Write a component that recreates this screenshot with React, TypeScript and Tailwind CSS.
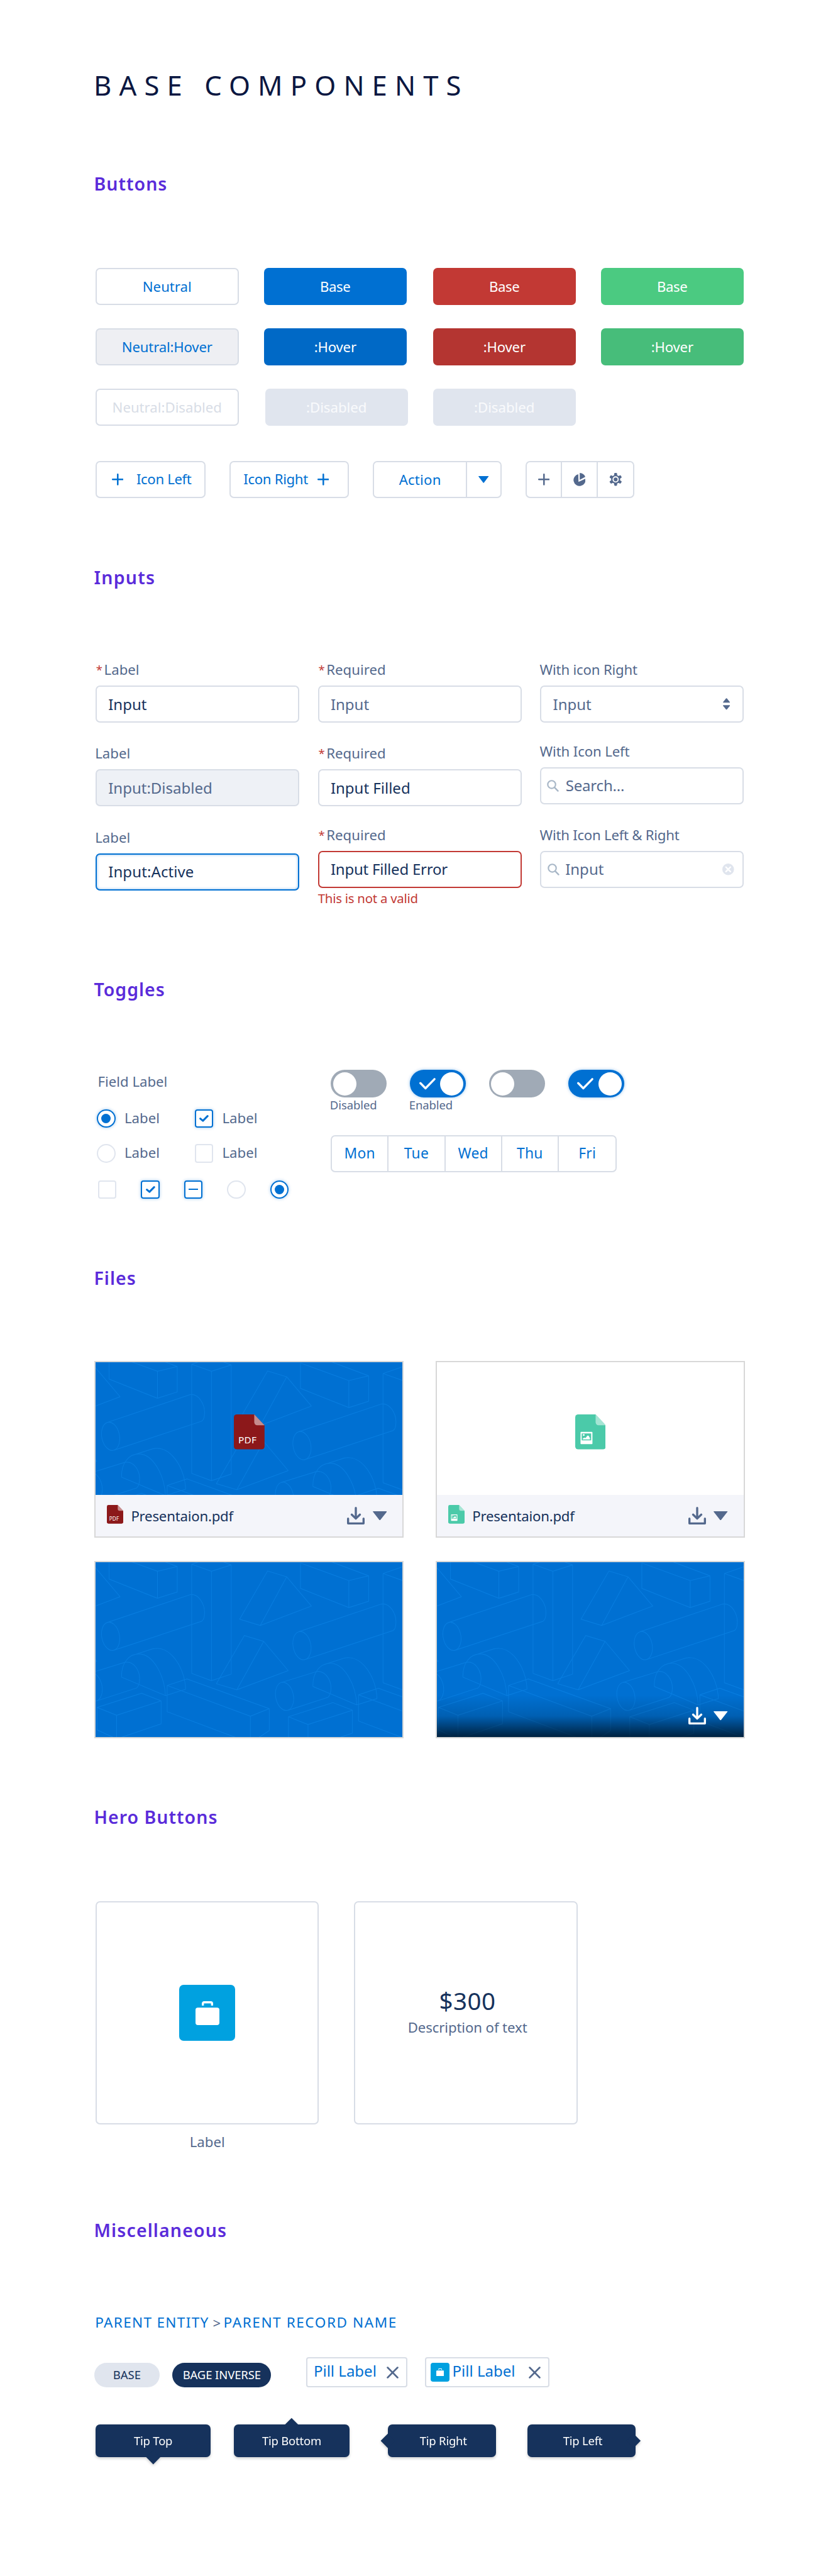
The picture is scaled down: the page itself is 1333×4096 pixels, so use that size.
import React from "react";

const cx = (...parts: (string | false | undefined)[]) => parts.filter(Boolean).join(" ");

/* ---------- icons ---------- */

const Plus = ({ className }: { className?: string }) => (
  <svg className={cx("h-[18.6px] w-[18.6px] shrink-0", className)} viewBox="0 0 20 20" fill="none" stroke="currentColor" strokeWidth="2.7" strokeLinecap="round">
    <path d="M10 1.3v17.4M1.3 10h17.4" />
  </svg>
);

const Caret = ({ className }: { className?: string }) => (
  <svg className={cx("shrink-0", className)} viewBox="0 0 24 15.4" fill="currentColor" preserveAspectRatio="none">
    <path d="M0.8 0h22.4q1.2 .2 .4 1.2L12.9 14.9q-.9 .9-1.8 0L.4 1.2Q-.4 .2 .8 0Z" />
  </svg>
);

const Pie = () => (
  <svg className="h-[20.6px] w-[19.4px]" viewBox="0 0 21 22.3" fill="currentColor">
    <path d="M8.5 2.2A10.3 10.3 0 1 0 20.7 10L8.9 15.4Z" />
    <path d="M11 0A11 11 0 0 1 20.6 6.7L11 11.9Z" />
  </svg>
);

const Gear = () => (
  <svg className="h-[20.6px] w-[20.6px]" viewBox="-11.2 -11.2 22.4 22.4">
    <g fill="currentColor">
      <circle r="7.8" />
      <rect x="-2.5" y="-11.1" width="5" height="22.2" rx="1.6" />
      <rect x="-2.5" y="-11.1" width="5" height="22.2" rx="1.6" transform="rotate(60)" />
      <rect x="-2.5" y="-11.1" width="5" height="22.2" rx="1.6" transform="rotate(120)" />
    </g>
    <circle r="4.4" fill="none" stroke="#fff" strokeWidth="2" />
  </svg>
);

const SortArrows = () => (
  <svg className="h-[18.6px] w-[11.2px] text-[#54698d]" viewBox="0 0 12 20" fill="currentColor">
    <path d="M.7 7.8Q-.3 7.6 .3 6.6L5.2.6Q6 -.2 6.8.6L11.7 6.6Q12.3 7.6 11.3 7.8Z" />
    <path d="M.7 12.2Q-.3 12.4 .3 13.4L5.2 19.4Q6 20.2 6.8 19.4L11.7 13.4Q12.3 12.4 11.3 12.2Z" />
  </svg>
);

const Search = () => (
  <svg className="h-[18.8px] w-[18.8px] shrink-0 text-[#a8b7c7]" viewBox="0 0 20 20" fill="none" stroke="currentColor" strokeLinecap="round">
    <circle cx="8" cy="7.9" r="6.6" strokeWidth="2.3" />
    <path d="M12.9 12.9L18.6 18.7" strokeWidth="2.6" />
  </svg>
);

const Clear = () => (
  <svg className="h-[18.6px] w-[18.6px]" viewBox="0 0 20 20">
    <circle cx="10" cy="10" r="10" fill="#e0e5ee" />
    <path d="M6.2 6.2l7.6 7.6M13.8 6.2l-7.6 7.6" stroke="#fff" strokeWidth="2.6" strokeLinecap="round" />
  </svg>
);

const Cross = () => (
  <svg className="h-[19px] w-[19px] text-[#54698d]" viewBox="0 0 20.6 20.6" fill="none" stroke="currentColor" strokeWidth="2.9" strokeLinecap="round">
    <path d="M1.7 1.7l17.2 17.2M18.9 1.7L1.7 18.9" />
  </svg>
);

const Download = () => (
  <svg className="h-[28px] w-[28px] shrink-0" viewBox="0 0 30 30" fill="none" stroke="currentColor" strokeWidth="3.6" strokeLinecap="round" strokeLinejoin="round">
    <path d="M15 1.8V19.5M8 13.2l7 6.8 7-6.8" />
    <path d="M1.8 20V28.2H28.2V20" />
  </svg>
);

const Briefcase = ({ className }: { className?: string }) => (
  <svg className={className} viewBox="0 0 41 41">
    <path d="M12.6 7.6V4Q12.6 1.9 14.8 1.9H26.2Q28.4 1.9 28.4 4V7.6" fill="none" stroke="#fff" strokeWidth="3.6" />
    <rect x="0" y="11" width="41" height="30" rx="4" fill="#fff" />
  </svg>
);

const FileIcon = ({ kind, className }: { kind: "pdf" | "image"; className?: string }) => (
  <svg className={cx("shrink-0", className)} viewBox="0 0 52 60" preserveAspectRatio="none">
    <path
      d="M5 0H34.6L52 18.6V55a5 5 0 0 1-5 5H5a5 5 0 0 1-5-5V5a5 5 0 0 1 5-5Z"
      fill={kind === "pdf" ? "#8c181a" : "#4bcaa9"}
    />
    <path d="M34.6 0L52 18.6H39.6a5 5 0 0 1-5-5Z" fill="#fff" fillOpacity="0.5" />
    {kind === "pdf" ? (
      <text x="7.6" y="50.2" fill="#fff" fontFamily="Noto Sans, sans-serif" fontSize="16.4" letterSpacing="0.2">
        PDF
      </text>
    ) : (
      <g>
        <path d="M10 30H28.2a1 1 0 0 1 1 1V50a1 1 0 0 1-1 1H10a1 1 0 0 1-1-1V31a1 1 0 0 1 1-1ZM11 32.6V44.4H27V32.6Z" fill="#fff" fillRule="evenodd" />
        <path d="M12.9 42.8V41.4L15.4 39.8L17.6 40.6L20.6 36.4H22.6L25 40.8V42.8Z" fill="#fff" />
        <circle cx="14.4" cy="35.4" r="1.6" fill="#fff" />
      </g>
    )}
  </svg>
);

/* ---------- decorative block pattern ---------- */

const Blocks = () => (
  <g>
    <path d="M144 805V906L369 982V875ZM369 982L461 957V856L369 875M461 856L290 801" />
    <path d="M528 847V1280L620 1309L712 1283V850L620 820ZL620 875L712 850M620 875V1309" />
    <ellipse cx="151" cy="1133" rx="41" ry="57" transform="rotate(-16 151 1133)" />
    <path d="M135 1078L520 968C560 962 589 1006 588 1040Q588 1066 575 1073L167 1188" />
    <path d="M881 874L970 897L847 1090L751 1065ZM970 897L1085 1013L847 1090" />
    <path d="M773 1130L863 1153L738 1345L643 1321ZM863 1153L977 1269L738 1345" />
    <path d="M202 1295C200 1240 235 1203 282 1203C350 1203 402 1290 406 1368ZM247 1210L345 1183C430 1165 497 1260 500 1343L406 1368" />
    <ellipse cx="70" cy="1334" rx="41" ry="57" transform="rotate(-16 70 1334)" />
    <path d="M55 1279L218 1236C258 1230 287 1268 286 1303Q285 1329 272 1338L87 1389" />
    <path d="M414 1328L506 1302L889 1420L801 1450ZV1432L801 1556V1450M889 1420V1507L801 1556" />
    <path d="M88 1415L295 1359L386 1389L179 1446ZV1504L179 1540V1446M386 1389V1480L179 1540" />
  </g>
);

const Pattern = ({ viewHeight }: { viewHeight: number }) => (
  <svg className="block h-full w-full" viewBox={`81 839 1428 ${viewHeight}`} preserveAspectRatio="none">
    <g fill="none" stroke="#087ddf" strokeWidth="3" strokeLinejoin="round">
      <g transform="translate(-890 -37)"><Blocks /></g>
      <Blocks />
      <g transform="translate(890 37)"><Blocks /></g>
    </g>
  </svg>
);

/* ---------- sections ---------- */

const Section = ({ title, height, tracking = "tracking-[1px]", children }: { title: string; height: string; tracking?: string; children: React.ReactNode }) => (
  <section className={cx("flex flex-col", height)}>
    <h2 className={cx("-ml-[2.5px] text-[28.5px] leading-[40px] font-semibold text-[#5a2bda]", tracking)}>{title}</h2>
    {children}
  </section>
);

const Button = ({ children, className }: { children: React.ReactNode; className: string }) => (
  <div className={cx("flex h-[59px] w-[227.5px] items-center justify-center rounded-[7px] text-[22.2px]", className)}>{children}</div>
);

const outlined = "border-2 border-[#d8dde6]";

const Buttons = () => (
  <Section title="Buttons" height="h-[625.4px]">
    <div className="mt-[113.6px] grid grid-cols-[267.5px_269px_267px_228px] gap-y-[37.2px]">
      <Button className={cx(outlined, "text-[#0070d2]")}>Neutral</Button>
      <Button className="bg-[#0070d2] tracking-[-0.4px] text-white">Base</Button>
      <Button className="bg-[#c23934] tracking-[-0.4px] text-white">Base</Button>
      <Button className="bg-[#4bca81] tracking-[-0.4px] text-white">Base</Button>
      <Button className={cx(outlined, "bg-[#eeeff3] tracking-[-0.18px] text-[#0070d2]")}>Neutral:Hover</Button>
      <Button className="bg-[#0069c6] tracking-[-0.18px] text-white">:Hover</Button>
      <Button className="bg-[#b43531] tracking-[-0.18px] text-white">:Hover</Button>
      <Button className="bg-[#47bd7a] tracking-[-0.18px] text-white">:Hover</Button>
      <Button className={cx(outlined, "text-[#d8dde6]")}>Neutral:Disabled</Button>
      <Button className="ml-[2px] bg-[#e0e5ee] text-white/80">:Disabled</Button>
      <Button className="bg-[#e0e5ee] text-white/80">:Disabled</Button>
    </div>
    <div className="mt-[55.4px] flex gap-[38px] text-[22.2px] text-[#0070d2]">
      <div className={cx("flex h-[59px] w-[175.3px] items-center rounded-[7px] pb-[1.5px] pl-[23.7px] tracking-[-0.36px]", outlined)}>
        <Plus className="relative top-[0.8px] mr-[20.6px]" />
        Icon Left
      </div>
      <div className={cx("flex h-[59px] w-[189.8px] items-center rounded-[7px] pb-[1.5px] pl-[20px] tracking-[-0.34px]", outlined)}>
        Icon Right
        <Plus className="relative top-[0.8px] ml-[15px]" />
      </div>
      <div className={cx("flex h-[59px] w-[204.8px] rounded-[7px]", outlined)}>
        <div className="flex w-[146px] items-center justify-center tracking-[0.2px]">Action</div>
        <div className="flex flex-1 items-center justify-center border-l-2 border-[#d8dde6]">
          <Caret className="h-[10.8px] w-[16.4px]" />
        </div>
      </div>
      <div className={cx("grid h-[59px] w-[173.4px] grid-cols-3 divide-x-2 divide-[#d8dde6] rounded-[7px] text-[#54698d]", outlined)}>
        <div className="flex items-center justify-center"><Plus /></div>
        <div className="flex items-center justify-center"><Pie /></div>
        <div className="flex items-center justify-center"><Gear /></div>
      </div>
    </div>
  </Section>
);

const Field = ({
  label,
  required,
  labelTracking,
  box = "border-[#d8dde6]",
  pad = "pl-[18.2px]",
  icon,
  end,
  children,
}: {
  label: string;
  required?: boolean;
  labelTracking?: string;
  box?: string;
  pad?: string;
  icon?: React.ReactNode;
  end?: React.ReactNode;
  children: React.ReactNode;
}) => (
  <div>
    <div className={cx("flex h-[30px] items-center text-[22.2px] leading-[30px] text-[#54698d]", labelTracking)}>
      {required && <span className="w-[14.4px] shrink-0 pl-[0.8px] text-[18.5px] leading-[30px] text-[#c23934]">*</span>}
      <span className="-ml-[0.8px] whitespace-nowrap">{label}</span>
    </div>
    <div className={cx("mt-[10px] flex h-[59px] w-[324px] items-center rounded-[7px] border-2 text-[24px]", pad, box)}>
      {icon}
      <span className="flex-1 whitespace-nowrap">{children}</span>
      {end}
    </div>
  </div>
);

const Inputs = () => (
  <Section title="Inputs" height="h-[655.5px]" tracking="tracking-[1.25px]">
    <div className="mt-[112.4px] flex gap-[29.7px] text-[#16325c]">
      <div className="flex w-[324px] flex-col gap-[34.2px]">
        <Field label="Label" required>Input</Field>
        <Field label="Label" box="border-[#d8dde6] bg-[#eef1f6] text-[#54698d]">Input:Disabled</Field>
        <Field label="Label" box="border-[#0070d2] shadow-[inset_0_0_4px_rgba(0,112,210,0.45)] tracking-[0.1px]">Input:Active</Field>
      </div>
      <div className="flex w-[324px] flex-col">
        <Field label="Required" required box="border-[#d8dde6] text-[#54698d]">Input</Field>
        <div className="mt-[34.2px]">
          <Field label="Required" required>Input Filled</Field>
        </div>
        <div className="mt-[30.5px]">
          <Field label="Required" required box="border-[#c23934] tracking-[-0.23px]">Input Filled Error</Field>
        </div>
        <p className="mt-[2.6px] text-[20.4px] leading-[28px] tracking-[-0.25px] text-[#c23934]">This is not a valid</p>
      </div>
      <div className="flex w-[324px] flex-col text-[#54698d]">
        <Field
          label="With icon Right"
          labelTracking="tracking-[-0.18px]"
          end={<span className="mr-[20.4px]"><SortArrows /></span>}
        >
          Input
        </Field>
        <div className="mt-[30.5px]">
          <Field label="With Icon Left" labelTracking="tracking-[-0.13px]" pad="pl-[8.6px]" box="border-[#d8dde6] tracking-[-0.2px]" icon={<span className="mr-[11px]"><Search /></span>}>
            Search...
          </Field>
        </div>
        <div className="mt-[34.2px]">
          <Field
            label="With Icon Left & Right"
            labelTracking="tracking-[-0.25px]"
            pad="pl-[9.4px]"
            icon={<span className="mr-[9.6px]"><Search /></span>}
            end={<span className="mr-[13.4px]"><Clear /></span>}
          >
            Input
          </Field>
        </div>
      </div>
    </div>
  </Section>
);

const glow = "shadow-[0_0_5px_rgba(0,112,210,0.4)]";

const Radio = ({ on }: { on?: boolean }) => (
  <span className={cx("flex h-[29.6px] w-[29.6px] shrink-0 items-center justify-center rounded-full border-2", on ? cx("border-[#0070d2]", glow) : "border-[#e0e5ee]")}>
    {on && <span className="h-[15px] w-[15px] rounded-full bg-[#0070d2]" />}
  </span>
);

const Check = ({ state }: { state?: "on" | "mixed" }) => (
  <span className={cx("flex h-[29.6px] w-[29.6px] shrink-0 items-center justify-center rounded-[4px] border-2", state ? cx("border-[#0070d2]", glow) : "border-[#e0e5ee]")}>
    {state === "on" && (
      <svg className="ml-[1px] h-[11px] w-[14.8px]" viewBox="0 0 16 12" fill="none" stroke="#0070d2" strokeWidth="3.3" strokeLinecap="round" strokeLinejoin="round">
        <path d="M1.7 6.2L6.2 10L14.3 1.8" />
      </svg>
    )}
    {state === "mixed" && <span className="h-[2px] w-[15px] bg-[#0070d2]" />}
  </span>
);

const Option = ({ control, className }: { control: React.ReactNode; className?: string }) => (
  <div className={cx("flex items-center gap-[14.4px] text-[22.2px] leading-[26px]", className)}>
    {control}
    <span className="-mt-[2px]">Label</span>
  </div>
);

const Switch = ({ on, label }: { on?: boolean; label?: string }) => (
  <div className="w-[88.9px]">
    <div className={cx("flex h-[44.4px] items-center justify-between rounded-full px-[3.7px]", on ? cx("bg-[#0070d2]", glow) : "bg-[#a0aab6]")}>
      {on && (
        <svg className="ml-[11px] h-[18.8px] w-[26px]" viewBox="0 0 28 20" fill="none" stroke="#fff" strokeWidth="3.6" strokeLinecap="round" strokeLinejoin="round">
          <path d="M1.9 8.8L10.6 17.6L26 1.9" />
        </svg>
      )}
      <span className="h-[37px] w-[37px] rounded-full bg-white" />
    </div>
    <div className="-ml-[1.2px] h-[22px] text-[18.5px] leading-[23px] tracking-[-0.1px]">{label}</div>
  </div>
);

const Toggles = () => (
  <Section title="Toggles" height="h-[458.7px]">
    <div className="mt-[107.7px] flex text-[#54698d]">
      <div className="mt-[4px] w-[374px] pl-[2px]">
        <div className="pl-[1.5px] text-[22.2px] leading-[30px]">Field Label</div>
        <div className="mt-[28.8px] flex">
          <Option className="w-[155.5px]" control={<Radio on />} />
          <Option control={<Check state="on" />} />
        </div>
        <div className="mt-[25.9px] flex">
          <Option className="w-[155.5px]" control={<Radio />} />
          <Option control={<Check />} />
        </div>
        <div className="mt-[27.8px] flex gap-[38.9px] pl-[1.8px]">
          <Check />
          <Check state="on" />
          <Check state="mixed" />
          <Radio />
          <Radio on />
        </div>
      </div>
      <div>
        <div className="flex gap-[37px]">
          <Switch label="Disabled" />
          <Switch on label="Enabled" />
          <Switch />
          <Switch on />
        </div>
        <div className={cx("mt-[37.3px] grid h-[59px] w-[455.3px] grid-cols-5 divide-x-2 divide-[#d8dde6] rounded-[7px] text-[22.8px] text-[#0070d2]", outlined)}>
          {["Mon", "Tue", "Wed", "Thu", "Fri"].map((day) => (
            <div key={day} className="flex items-center justify-center tracking-[0.25px]">{day}</div>
          ))}
        </div>
      </div>
    </div>
  </Section>
);

const FileActions = () => (
  <div className="ml-auto flex items-center gap-[12.4px]">
    <Download />
    <Caret className="h-[14.2px] w-[22.4px]" />
  </div>
);

const FileCard = ({ kind, overlay }: { kind?: "pdf" | "image"; overlay?: boolean }) => (
  <div className="flex h-[281.4px] w-[492.4px] flex-col border-2 border-[#d8d8d8]">
    <div className={cx("relative min-h-0 flex-1", kind === "image" ? "bg-white" : "bg-[#0070d2]")}>
      {kind !== "image" && (
        <div className="absolute inset-0">
          <Pattern viewHeight={kind ? 526 : 692} />
        </div>
      )}
      {kind && (
        <div className="absolute inset-0 flex items-center justify-center pt-[11px]">
          <FileIcon kind={kind} className="h-[55.6px] w-[48.8px]" />
        </div>
      )}
      {overlay && (
        <div className="absolute inset-x-0 bottom-0 flex h-[66.6px] items-center bg-linear-to-b from-black/0 via-black/15 to-black/70 pr-[25.4px] text-white">
          <FileActions />
        </div>
      )}
    </div>
    {kind && (
      <div className="flex h-[66.6px] shrink-0 items-center bg-[#f4f5fa] pr-[25.4px] pl-[18.4px] text-[#54698d]">
        <FileIcon kind={kind} className="mr-[12px] mb-[4px] h-[29.8px] w-[26px]" />
        <span className="pt-px text-[22.2px] tracking-[-0.21px] text-[#16325c]">Presentaion.pdf</span>
        <FileActions />
      </div>
    )}
  </div>
);

const Files = () => (
  <Section title="Files" height="h-[857px]">
    <div className="mt-[111.9px] -ml-[2px] grid grid-cols-[492.4px_492.4px] gap-x-[50.4px] gap-y-[37.1px]">
      <FileCard kind="pdf" />
      <FileCard kind="image" />
      <FileCard />
      <FileCard overlay />
    </div>
  </Section>
);

const HeroButtons = () => (
  <Section title="Hero Buttons" height="h-[657.1px]">
    <div className="mt-[114px] flex gap-[56px] text-[22.2px] text-[#54698d]">
      <div>
        <div className={cx("flex h-[355.4px] w-[355.4px] items-center justify-center rounded-[7px]", outlined)}>
          <div className="flex h-[89px] w-[89px] items-center justify-center rounded-[7px] bg-[#00a1e0]">
            <Briefcase className="h-[38px] w-[38px]" />
          </div>
        </div>
        <div className="mt-[13px] text-center leading-[30px]">Label</div>
      </div>
      <div className={cx("flex h-[355.4px] w-[355.4px] flex-col items-center justify-center rounded-[7px] pb-[4px] pl-[5px]", outlined)}>
        <div className="text-[38.5px] leading-[44px] tracking-[0.5px] text-[#16325c]">$300</div>
        <div className="mt-[6px] leading-[30px] tracking-[-0.1px]">Description of text</div>
      </div>
    </div>
  </Section>
);

const Tip = ({ children, arrow, width = "w-[183.3px]", className }: { children: React.ReactNode; arrow: string; width?: string; className?: string }) => (
  <div className={cx("relative flex h-[52px] items-center justify-center rounded-[7px] bg-[#16325c] text-[18.5px] tracking-[-0.22px] text-white drop-shadow-[0_2px_2px_rgba(0,0,0,0.2)]", width, className)}>
    <span className={cx("absolute h-[15.6px] w-[15.6px] rotate-45 bg-[#16325c]", arrow)} />
    {children}
  </div>
);

const PillLabel = ({ icon }: { icon?: boolean }) => (
  <div className={cx("flex h-[48px] items-center rounded-[4px] text-[24px] text-[#0070d2]", outlined, icon ? "w-[197.8px] pr-[11.3px] pl-[7.2px]" : "w-[161px] pr-[11.6px] pl-[10px]")}>
    {icon && (
      <span className="mr-[4.8px] flex h-[29.6px] w-[29.6px] items-center justify-center rounded-[4px] bg-[#00a1e0]">
        <Briefcase className="h-[12.4px] w-[12.4px]" />
      </span>
    )}
    <span className="-mt-[4px]">Pill Label</span>
    <span className="mt-[2px] ml-auto"><Cross /></span>
  </div>
);

const Miscellaneous = () => (
  <Section title="Miscellaneous" height="" tracking="tracking-[1.12px]">
    <div className="mt-[112.1px] -ml-[0.8px] flex items-center text-[22.6px] leading-[30px] tracking-[1.3px] text-[#0070d2]">
      <span>PARENT ENTITY</span>
      <span className="w-[23px] pl-[6px] text-[22px] tracking-normal text-[#54698d]">&gt;</span>
      <span className="tracking-[1.55px]">PARENT RECORD NAME</span>
    </div>
    <div className="mt-[39.8px] flex items-end text-[18.5px]">
      <div className="-ml-[2px] flex h-[39px] w-[103.7px] items-center justify-center rounded-full bg-[#e0e5ee] pb-[2px] text-[#16325c]">BASE</div>
      <div className="ml-[20.4px] flex h-[39px] w-[157.4px] items-center justify-center rounded-full bg-[#16325c] pb-[2px] tracking-[-0.12px] text-white">BAGE INVERSE</div>
      <div className="ml-[55.5px] flex gap-[28px]">
        <PillLabel />
        <PillLabel icon />
      </div>
    </div>
    <div className="mt-[59.3px] flex">
      <Tip arrow="-bottom-[7px] left-[84px]">Tip Top</Tip>
      <Tip className="ml-[37px]" arrow="-top-[7px] left-[84px]">Tip Bottom</Tip>
      <Tip className="ml-[61.1px] pl-[5px]" width="w-[172.2px]" arrow="-left-[8px] top-[18px]">Tip Right</Tip>
      <Tip className="ml-[50px] pl-[4px]" width="w-[172.2px]" arrow="-right-[4.5px] top-[18px]">Tip Left</Tip>
    </div>
  </Section>
);

export default function App() {
  return (
    <div className="h-[4096px] w-[1333px] overflow-hidden bg-white pt-[105px] pl-[152px] font-['Noto_Sans',sans-serif]">
      <h1 className="-ml-[3px] h-[167.4px] text-[43.6px] leading-[60px] tracking-[12.1px] whitespace-nowrap text-[#0b1741]">BASE COMPONENTS</h1>
      <Buttons />
      <Inputs />
      <Toggles />
      <Files />
      <HeroButtons />
      <Miscellaneous />
    </div>
  );
}
